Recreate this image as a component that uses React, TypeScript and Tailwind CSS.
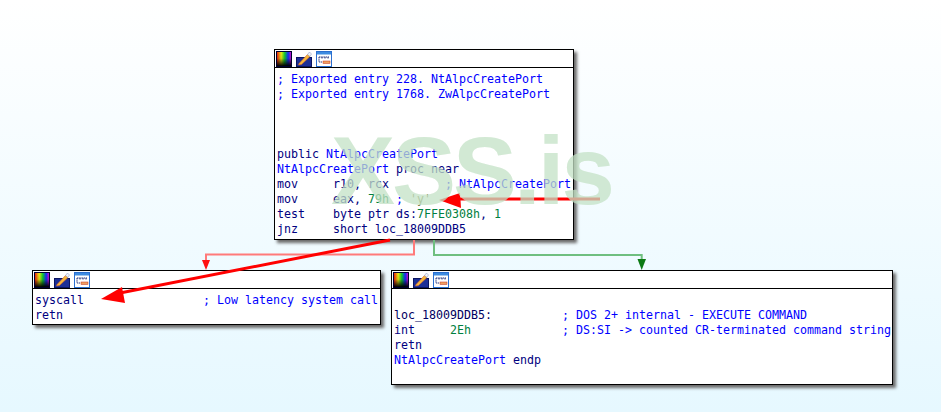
const mono = "font-['DejaVu_Sans_Mono',monospace] text-[11.63px] leading-[15px]";

type Run = { t: string; c?: string };

const NAVY = 'text-[#000080]';
const BLUE = 'text-[#0000ff]';
const GREEN = 'text-[#008040]';

function NodeIcons() {
    return (
        <div className="flex items-center gap-[4px] h-[18px] pl-[1px] border-b border-black">
            <svg width="16" height="16" viewBox="0 0 16 16">
                <defs>
                    <linearGradient id="hue" x1="0" y1="0" x2="1" y2="0">
                        <stop offset="0" stopColor="#f02010" />
                        <stop offset="0.3" stopColor="#f0f010" />
                        <stop offset="0.55" stopColor="#10d030" />
                        <stop offset="0.8" stopColor="#1030ff" />
                        <stop offset="1" stopColor="#d010d0" />
                    </linearGradient>
                    <linearGradient id="shade" x1="0" y1="0" x2="0" y2="1">
                        <stop offset="0" stopColor="#000" stopOpacity="0" />
                        <stop offset="0.45" stopColor="#000" stopOpacity="0.1" />
                        <stop offset="1" stopColor="#000" stopOpacity="1" />
                    </linearGradient>
                </defs>
                <rect x="0" y="0" width="16" height="16" fill="#000030" />
                <rect x="1" y="1" width="14" height="14" fill="url(#hue)" />
                <rect x="1" y="1" width="14" height="14" fill="url(#shade)" />
            </svg>
            <svg width="16" height="16" viewBox="0 0 16 16">
                <rect x="0.5" y="6.5" width="15" height="9" fill="#1c2f96" stroke="#0a1460" />
                <path d="M3 12.5 L11.5 3.5 L14 5.5 L5.5 13.5 L2.5 14 Z" fill="#f6b73c" stroke="#d9622b" strokeWidth="0.6" />
                <path d="M11.5 3.5 L13.5 1 L15.5 3 L14 5.5 Z" fill="#f4f4f4" stroke="#7a8fc0" strokeWidth="0.5" />
            </svg>
            <svg width="16" height="16" viewBox="0 0 16 16">
                <rect x="0.5" y="0.5" width="15" height="15" fill="#fff" stroke="#2a6fd0" />
                <rect x="1" y="1" width="14" height="2.5" fill="#3d8be0" />
                <path d="M3 6 h10 M3 6 v5 h3 M6 6 v2 M9 6 v2 M12 6 v2" stroke="#20307a" strokeWidth="1" fill="none" strokeDasharray="1.5 0.7" />
                <rect x="7" y="10" width="7" height="2.5" fill="#f0a060" stroke="#c03020" strokeWidth="0.5" />
            </svg>
        </div>
    );
}

function CodeLine({ runs }: { runs: Run[] }) {
    return (
        <div className="h-[15px] whitespace-pre">
            {runs.map((r, i) => (
                <span key={i} className={r.c ?? NAVY}>
                    {r.t}
                </span>
            ))}
        </div>
    );
}

function GraphNode({ className, lines }: { className: string; lines: Run[][] }) {
    return (
        <div
            className={`absolute bg-white border border-black shadow-[3px_3px_3px_#6b6b6b] ${mono} ${className}`}
        >
            <NodeIcons />
            <div className="pt-[4px] pl-[2px]">
                {lines.map((runs, i) => (
                    <CodeLine key={i} runs={runs} />
                ))}
            </div>
        </div>
    );
}

const topLines: Run[][] = [
    [{ t: '; Exported entry 228. NtAlpcCreatePort', c: BLUE }],
    [{ t: '; Exported entry 1768. ZwAlpcCreatePort', c: BLUE }],
    [],
    [],
    [],
    [{ t: 'public ' }, { t: 'NtAlpcCreatePort', c: BLUE }],
    [{ t: 'NtAlpcCreatePort', c: BLUE }, { t: ' proc near' }],
    [{ t: 'mov     r10, rcx        ' }, { t: '; NtAlpcCreatePort', c: BLUE }],
    [{ t: 'mov     eax, ' }, { t: '79h', c: GREEN }, { t: ' ; ', c: BLUE }, { t: "'y'", c: 'text-[#808040]' }],
    [{ t: 'test    byte ptr ds:' }, { t: '7FFE0308h', c: GREEN }, { t: ', ' }, { t: '1', c: GREEN }],
    [{ t: 'jnz     short ' }, { t: 'loc_18009DDB5' }],
];

const leftLines: Run[][] = [
    [{ t: 'syscall                 ' }, { t: '; Low latency system call', c: BLUE }],
    [{ t: 'retn' }],
];

const rightLines: Run[][] = [
    [],
    [{ t: 'loc_18009DDB5:', c: 'text-[#000060]' }, { t: '          ' }, { t: '; DOS 2+ internal - EXECUTE COMMAND', c: BLUE }],
    [{ t: 'int     ' }, { t: '2Eh', c: GREEN }, { t: '             ' }, { t: '; DS:SI -> counted CR-terminated command string', c: BLUE }],
    [{ t: 'retn' }],
    [{ t: 'NtAlpcCreatePort', c: BLUE }, { t: ' endp' }],
];

export default function App() {
    return (
        <div className="relative w-[941px] h-[412px] overflow-hidden bg-gradient-to-b from-white to-[#e6f8ff]">
            <GraphNode className="left-[274px] top-[49px] w-[300px] h-[191px]" lines={topLines} />
            <GraphNode className="left-[32px] top-[270px] w-[349px] h-[55px]" lines={leftLines} />
            <GraphNode className="left-[391px] top-[270px] w-[502px] h-[115px]" lines={rightLines} />

            {/* edges between the blocks */}
            <svg className="absolute inset-0" width="941" height="412" viewBox="0 0 941 412">
                <path d="M414 240 V254.5 H206 V260" fill="none" stroke="#ff7a7a" strokeWidth="2" />
                <path d="M202 260 H210 L206 270 Z" fill="#ff1010" />
                <path d="M434 240 V255 H641.7 V260" fill="none" stroke="#6fbf80" strokeWidth="2" />
                <path d="M637.5 259 H646 L641.7 270 Z" fill="#0c7a14" />
            </svg>

            {/* hand drawn red arrows, they sit under the watermark */}
            <svg className="absolute inset-0" width="941" height="412" viewBox="0 0 941 412">
                <path d="M458 199 H600" stroke="#ff0000" strokeWidth="3" fill="none" />
                <path d="M439 200 L460 193 L461 208 Z" fill="#ff0000" />
                <path d="M390 240 L120 293" stroke="#ff0000" strokeWidth="3" fill="none" />
                <path d="M101 299 L122 287 L125 303 Z" fill="#ff0000" />
            </svg>

            {/* watermark */}
            <div className="absolute left-[331px] top-[117px] font-['Liberation_Sans',sans-serif] font-bold text-[96px] leading-[108px] tracking-[-3px] text-[#c4e2c6] opacity-75 whitespace-nowrap">
                XSS.is
            </div>
        </div>
    );
}
